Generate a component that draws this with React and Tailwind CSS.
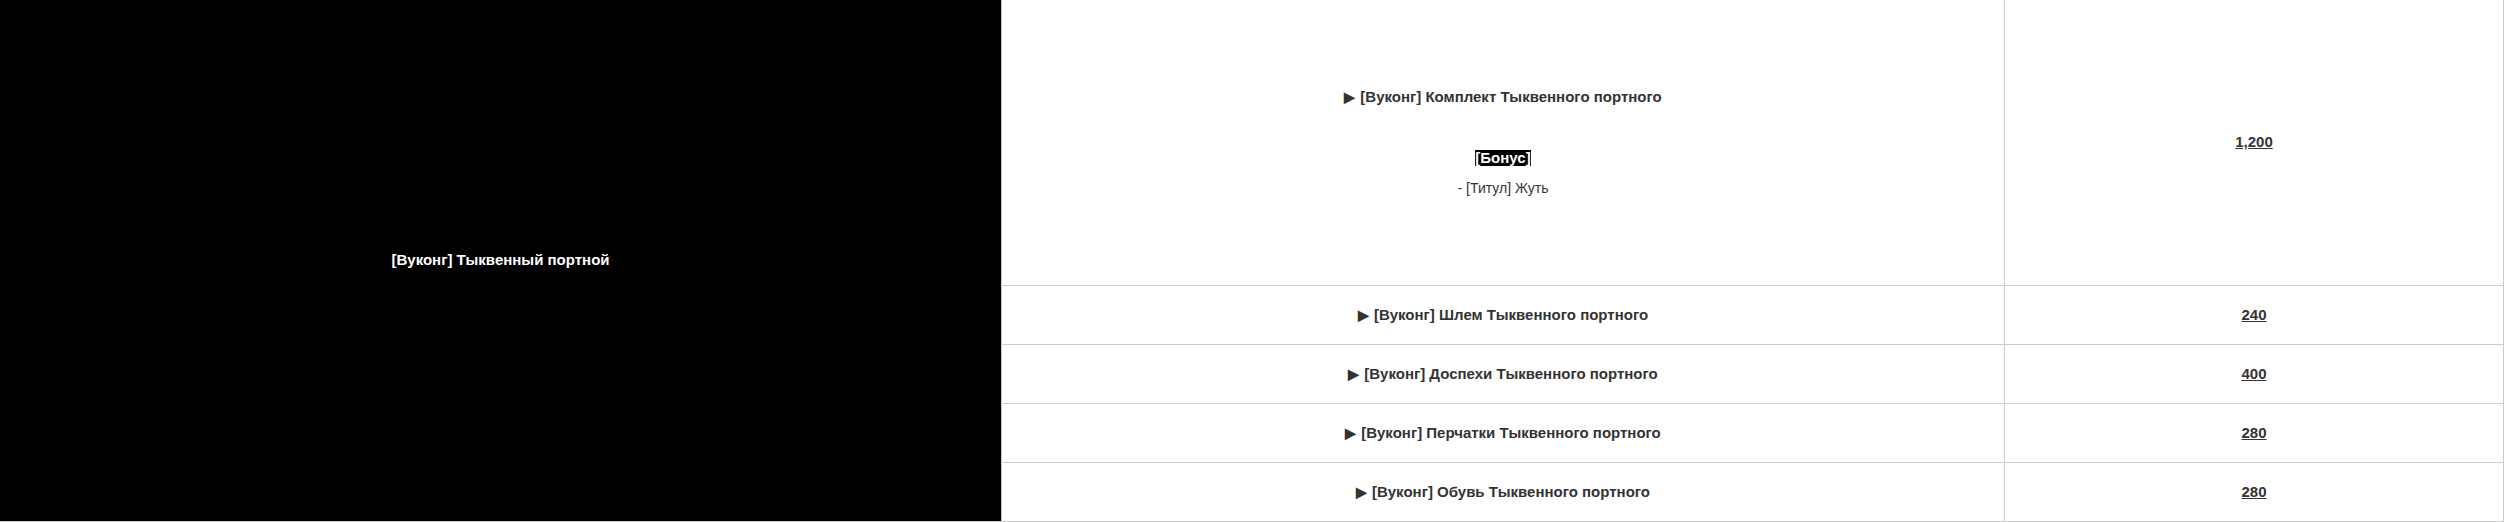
export default function App() {
  const rows = [
    { name: "[Вуконг] Шлем Тыквенного портного", price: "240" },
    { name: "[Вуконг] Доспехи Тыквенного портного", price: "400" },
    { name: "[Вуконг] Перчатки Тыквенного портного", price: "280" },
    { name: "[Вуконг] Обувь Тыквенного портного", price: "280" },
  ];
  return (
    <div
      className="w-[2504px] h-[522px] bg-white text-[14px] text-[#333]"
      style={{ fontFamily: '"Liberation Sans", Arial, sans-serif' }}
    >
      <div className="grid grid-cols-[1002px_1003px_499px] grid-rows-[286px_59px_59px_59px_59px]">
        <div className="row-span-5 bg-black border-r border-b border-[#ccc] flex items-center justify-center">
          <span className="font-bold text-[15px] text-white">[Вуконг] Тыквенный портной</span>
        </div>
        <div className="border-r border-b border-[#ccc] flex flex-col items-center justify-center leading-[30px]">
          <div className="font-bold text-[15px] mb-[31px]">
            <span className="text-[14px] mr-[5px]">▶</span>[Вуконг] Комплект Тыквенного портного
          </div>
          <div>
            <span className="bg-black text-white font-bold text-[15px] leading-[16px] inline-block">[Бонус]</span>
          </div>
          <div>- [Титул] Жуть</div>
        </div>
        <div className="border-r border-b border-[#ccc] flex items-center justify-center">
          <a className="font-bold text-[15px] underline text-[#333]">1,200</a>
        </div>
        {rows.map((r) => (
          <div key={r.name} className="contents">
            <div className="border-r border-b border-[#ccc] flex items-center justify-center">
              <span className="font-bold text-[15px]">
                <span className="text-[14px] mr-[5px]">▶</span>
                {r.name}
              </span>
            </div>
            <div className="border-r border-b border-[#ccc] flex items-center justify-center">
              <a className="font-bold text-[15px] underline text-[#333]">{r.price}</a>
            </div>
          </div>
        ))}
      </div>
    </div>
  );
}
